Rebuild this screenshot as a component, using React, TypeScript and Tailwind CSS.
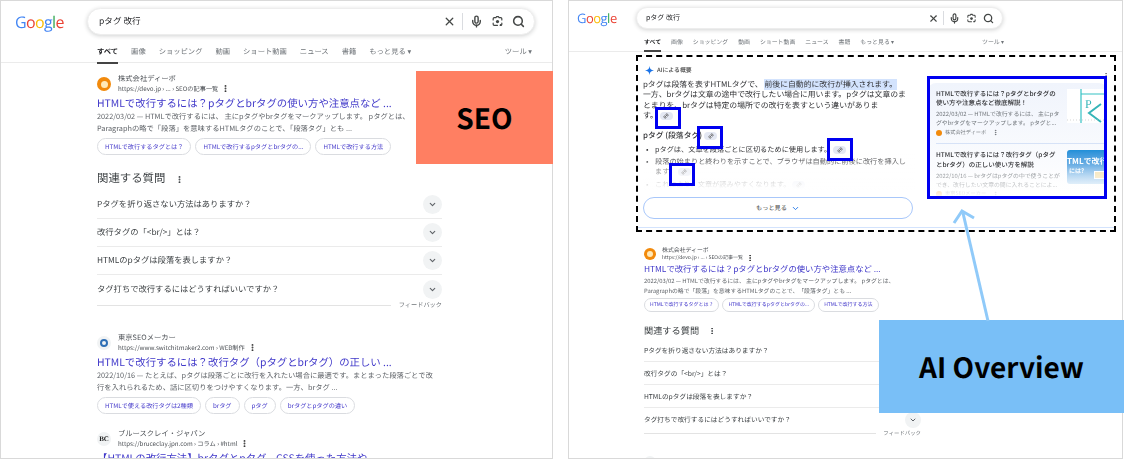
import { ChevronDown, EllipsisVertical, Link2, Mic, Search, X } from "lucide-react";
import type { ReactNode } from "react";

const FONT = { fontFamily: '"Noto Sans CJK JP", sans-serif' };

const LensIcon = ({ className }: { className: string }) => (
  <svg viewBox="0 0 24 24" className={className} fill="none" stroke="#444746" strokeWidth="2.2">
    <path d="M4 9V7a2 2 0 0 1 2-2h3l1.5-2h3L15 5h3a2 2 0 0 1 2 2v2M20 15v2a2 2 0 0 1-2 2h-1M4 15v2a2 2 0 0 0 2 2h6" strokeLinecap="round" />
    <circle cx="12" cy="12" r="3" fill="#444746" stroke="none" />
    <circle cx="18" cy="18.5" r="1.8" fill="#444746" stroke="none" />
  </svg>
);

const Logo = ({ className }: { className: string }) => (
  <div className={`font-['Open_Sans',sans-serif] tracking-[-0.04em] ${className}`}>
    <span className="text-[#4285f4]">G</span>
    <span className="text-[#ea4335]">o</span>
    <span className="text-[#fbbc05]">o</span>
    <span className="text-[#4285f4]">g</span>
    <span className="text-[#34a853]">l</span>
    <span className="text-[#ea4335]">e</span>
  </div>
);

const TABS = ["画像", "ショッピング", "動画", "ショート動画", "ニュース", "書籍"];

const Favicon = ({ kind, className }: { kind: string; className: string }) => {
  if (kind === "devo") {
    return (
      <div className={`rounded-full bg-[#f28a0c] flex items-center justify-center shrink-0 ${className}`}>
        <div className="w-1/2 h-1/2 rounded-full bg-[#ffe9b8]" />
      </div>
    );
  }
  if (kind === "tokyo") {
    return (
      <div className={`rounded-full bg-[#f1f3f4] flex items-center justify-center shrink-0 ${className}`}>
        <div className="w-3/5 h-3/5 rounded-full border-2 border-[#2f6fb5]" />
      </div>
    );
  }
  return (
    <div className={`rounded-full bg-[#f1f3f4] flex items-center justify-center shrink-0 font-['Liberation_Serif',serif] font-bold text-[#222] ${className}`}>
      BC
    </div>
  );
};

type Size = {
  head: string;
  fav: string;
  gap: string;
  name: string;
  url: string;
  dots: string;
  title: string;
  snippet: string;
  chips: string;
  chip: string;
};

const BIG: Size = {
  head: "h-[18px]",
  fav: "w-[14px] h-[14px] text-[7px]",
  gap: "gap-[7px]",
  name: "text-[7.3px] leading-[9px] text-[#4d5156]",
  url: "text-[6.2px] leading-[9px] text-[#4d5156]",
  dots: "w-[9px] h-[9px] ml-[3px]",
  title: "text-[10.4px] leading-[16px] mt-[2px] h-[16px]",
  snippet: "text-[7.3px] leading-[12px]",
  chips: "flex gap-[4px] mt-[3px]",
  chip: "h-[17px] px-[7px] text-[6.2px]",
};

const SMALL: Size = {
  head: "h-[15px]",
  fav: "w-[12px] h-[12px] text-[6px]",
  gap: "gap-[6px]",
  name: "text-[5.9px] leading-[8px] text-[#4d5156]",
  url: "text-[5px] leading-[7px] text-[#4d5156]",
  dots: "w-[8px] h-[8px] ml-[3px]",
  title: "text-[8.35px] leading-[14px] mt-[1px] h-[14px]",
  snippet: "text-[5.85px] leading-[9.5px]",
  chips: "flex gap-[3px] mt-[3px]",
  chip: "h-[14px] px-[5px] text-[5px]",
};

type ResultProps = {
  size: Size;
  kind: string;
  name: string;
  url: string;
  title?: string;
  lines?: string[];
  chips?: string[];
  className?: string;
};

const Result = ({ size, kind, name, url, title, lines = [], chips = [], className = "" }: ResultProps) => (
  <div className={`whitespace-nowrap ${className}`}>
    <div className={`flex items-center ${size.head} ${size.gap}`}>
      <Favicon kind={kind} className={size.fav} />
      <div>
        <div className={size.name}>{name}</div>
        {url && (
          <div className={`flex items-center ${size.url}`}>
            {url}
            <EllipsisVertical className={`${size.dots} text-[#333]`} strokeWidth={3} />
          </div>
        )}
      </div>
    </div>
    {title && <div className={`text-[#3f37c9] ${size.title}`}>{title}</div>}
    {lines.map((l) => (
      <div key={l} className={`text-[#5f6368] ${size.snippet}`}>{l}</div>
    ))}
    {chips.length > 0 && (
      <div className={size.chips}>
        {chips.map((c) => (
          <div key={c} className={`flex items-center rounded-full border border-[#dadce0] text-[#4338ca] ${size.chip}`}>{c}</div>
        ))}
      </div>
    )}
  </div>
);

const QUESTIONS = [
  "Pタグを折り返さない方法はありますか？",
  "改行タグの「<br/>」とは？",
  "HTMLのpタグは段落を表しますか？",
  "タグ打ちで改行するにはどうすればいいですか？",
];

const Questions = ({ big }: { big: boolean }) => (
  <div className={big ? "w-[345px]" : "w-[277px]"}>
    <div className={`flex items-center text-[#3c4043] ${big ? "text-[11.4px] h-[16px] gap-[10px]" : "text-[9.2px] h-[14px] gap-[9px]"}`}>
      関連する質問
      <EllipsisVertical className={big ? "w-[9px] h-[9px]" : "w-[8px] h-[8px]"} strokeWidth={3} />
    </div>
    <div className={big ? "mt-[4px]" : "mt-[1px]"}>
      {QUESTIONS.map((q, i) => (
        <div
          key={q}
          className={`flex items-center justify-between text-[#3c4043] ${
            i < 3 ? "border-b border-[#ebebeb]" : ""
          } ${big ? "h-[28px] text-[8.3px]" : "h-[23px] text-[6.7px]"}`}
        >
          {q}
          <div className={`rounded-full bg-[#f1f3f4] flex items-center justify-center ${big ? "w-[19px] h-[19px]" : "w-[16px] h-[16px]"}`}>
            <ChevronDown className={big ? "w-[9px] h-[9px]" : "w-[8px] h-[8px]"} color="#5f6368" strokeWidth={3} />
          </div>
        </div>
      ))}
    </div>
    <div className={`flex items-center text-[#70757a] ${big ? "gap-[8px] text-[6.2px] h-[8px] -mt-[2px]" : "gap-[7px] text-[5.4px] h-[8px] -mt-[2px]"}`}>
      <div className="flex-1 border-t border-[#e3e3e3]" />
      フィードバック
    </div>
  </div>
);

const SearchBar = ({ big }: { big: boolean }) => {
  const icon = big ? "w-[13px] h-[13px]" : "w-[11px] h-[11px]";
  return (
    <div
      className={`flex items-center rounded-full bg-white border border-[#ededed] shadow-[0_1px_4px_rgba(32,33,36,0.2)] ${
        big ? "w-[448px] h-[27px] pl-[11px] pr-[9px] text-[8.6px]" : "w-[367px] h-[22px] pl-[9px] pr-[8px] text-[7px]"
      }`}
    >
      <span className="flex-1 text-[#202124]">pタグ 改行</span>
      <div className={`flex items-center ${big ? "gap-[8px]" : "gap-[6px]"}`}>
        <X className={`${icon} -mr-[2px]`} color="#444746" strokeWidth={2.4} />
        <div className={`border-l border-[#dadce0] -mr-[1px] ${big ? "h-[17px]" : "h-[14px]"}`} />
        <Mic className={icon} color="#444746" strokeWidth={2.6} />
        <LensIcon className={icon} />
        <Search className={icon} color="#444746" strokeWidth={2.8} />
      </div>
    </div>
  );
};

const Tabs = ({ big }: { big: boolean }) => (
  <div className={`flex justify-between text-[#70757a] ${big ? "w-[435px] h-[17px] text-[7.3px]" : "w-[360px] h-[14px] text-[5.9px]"}`}>
    <div className={`flex ${big ? "gap-[13px]" : "gap-[10px]"}`}>
      <div className="font-bold text-[#202124] border-b-2 border-[#444]">すべて</div>
      {TABS.map((t) => (
        <div key={t}>{t}</div>
      ))}
      <div>もっと見る ▾</div>
    </div>
    <div>ツール ▾</div>
  </div>
);

const DEVO = {
  kind: "devo",
  name: "株式会社ディーボ",
  url: "https://devo.jp › ... › SEOの記事一覧",
  title: "HTMLで改行するには？pタグとbrタグの使い方や注意点など ...",
  lines: [
    "2022/03/02 — HTMLで改行するには、 主にpタグやbrタグをマークアップします。 pタグとは、",
    "Paragraphの略で「段落」を意味するHTMLタグのことで、「段落タグ」とも ...",
  ],
  chips: ["HTMLで改行するタグとは？", "HTMLで改行するpタグとbrタグの...", "HTMLで改行する方法"],
};

const Pill = () => (
  <span className="inline-flex items-center justify-center w-[13px] h-[8px] rounded-full bg-[#e4e8f3] align-middle ml-[2px]">
    <Link2 className="w-[6px] h-[6px] -rotate-45" color="#555" strokeWidth={3} />
  </span>
);

const SourceCard = ({ title, lines, source, thumb }: { title: string[]; lines: string[]; source: string; thumb: ReactNode }) => (
  <div className="flex gap-[6px] whitespace-nowrap">
    <div className="w-[126px] overflow-hidden">
      {title.map((t) => (
        <div key={t} className="text-[6.5px] leading-[9.2px] font-medium text-[#303134]">{t}</div>
      ))}
      <div className="mt-[2px]">
        {lines.map((l) => (
          <div key={l} className="text-[5.85px] leading-[9px] text-[#70757a]">{l}</div>
        ))}
      </div>
      <div className="flex items-center gap-[3px] mt-[1px] text-[5.2px] text-[#70757a] h-[9px]">
        <div className="w-[6px] h-[6px] rounded-full bg-[#f28a0c]" />
        {source}
        <EllipsisVertical className="w-[7px] h-[7px] ml-[3px]" strokeWidth={3} />
      </div>
    </div>
    {thumb}
  </div>
);

const ThumbP = () => (
  <div className="w-[40px] h-[34px] bg-white overflow-hidden flex items-center justify-center shrink-0">
    <svg viewBox="0 0 40 34" className="w-[40px] h-[34px]">
      <path d="M14 0V34M14 5H40" stroke="#35c2c4" strokeWidth="1.2" fill="none" />
      <text x="18" y="19" fontSize="12" fill="#35b5b8" fontFamily="Liberation Serif">P</text>
      <path d="M34 15L22 24L34 33" stroke="#35b5b8" strokeWidth="2" fill="none" />
      <path d="M0 31H40" stroke="#bbb" strokeWidth="0.6" strokeDasharray="1 2" />
    </svg>
  </div>
);

const ThumbBlue = () => (
  <div className="w-[40px] h-[34px] rounded-l-[3px] overflow-hidden bg-gradient-to-b from-[#1f8fd8] to-[#b7d8f2] text-white font-bold text-[8px] leading-[9px] pt-[7px] shrink-0 relative">
    <span className="-ml-[6px] block">HTMLで改行</span>
    <span className="text-[6px] pl-[2px]">には?</span>
    <div className="absolute right-[2px] bottom-[5px] w-[11px] h-[8px] bg-[#f4e3b4] border border-white" />
  </div>
);

const AiOverview = () => (
  <div className="relative ml-[67px] mt-[3px] w-[480px] h-[177px] border-2 border-dashed border-black pl-[5px] pt-[8px] text-[#202124] whitespace-nowrap overflow-hidden">
    <div className="absolute right-[4px] top-[15px]">
      <EllipsisVertical className="w-[8px] h-[8px] text-[#777]" strokeWidth={3} />
    </div>
    <div className="flex gap-[13px]">
      <div className="w-[272px]">
        <div className="flex items-center gap-[3px] text-[5.9px] h-[10px] font-medium text-[#444]">
          <svg viewBox="0 0 24 24" className="w-[9px] h-[9px] ml-[2px]">
            <path d="M12 0C13 8 16 11 24 12C16 13 13 16 12 24C11 16 8 13 0 12C8 11 11 8 12 0Z" fill="#1a73e8" />
          </svg>
          AIによる概要
        </div>
        <div className="text-[7.85px] leading-[10.4px] mt-[5px] text-[#303134]">
          <div>
            pタグは段落を表すHTMLタグで、 <span className="bg-[#d3e3fd]">前後に自動的に改行が挿入されます。</span>
          </div>
          <div>一方、brタグは文章の途中で改行したい場合に用います。pタグは文章のま</div>
          <div>とまりを、brタグは特定の場所での改行を表すという違いがありま</div>
          <div>す。<Pill /></div>
        </div>
        <div className="relative mt-[8px] text-[7.8px] leading-[12px] text-[#303134]">
          <div className="font-medium">pタグ (段落タグ)<Pill /></div>
          <ul className="mt-[3px] text-[7.2px] leading-[10.4px]">
            <li className="flex"><span className="w-[12px] pl-[3px]">•</span><span>pタグは、文章を段落ごとに区切るために使用します。<Pill /></span></li>
            <li className="flex mt-[2px]"><span className="w-[12px] pl-[3px]">•</span><span>段落の始まりと終わりを示すことで、ブラウザは自動的に前後に改行を挿入し<br />ます。<Pill /></span></li>
            <li className="flex mt-[2px]"><span className="w-[12px] pl-[3px]">•</span><span>これにより、文章が読みやすくなります。<Pill /></span></li>
          </ul>
          <div className="absolute left-0 right-0 bottom-0 h-[38px] bg-gradient-to-b from-white/0 to-white" />
        </div>
      </div>
      <div className="relative w-[179px] h-[116px] mt-[18px] bg-gradient-to-b from-[#f0f4fc] to-white rounded-[8px] pl-[8px] pt-[6px] overflow-hidden">
        <SourceCard
          title={["HTMLで改行するには？pタグとbrタグの", "使い方や注意点など徹底解説！"]}
          lines={["2022/03/02 — HTMLで改行するには、 主にpタ", "グやbrタグをマークアップします。 pタグと..."]}
          source="株式会社ディーボ"
          thumb={<ThumbP />}
        />
        <div className="border-t border-[#d6e2f7] mt-[6px] mb-[6px]" />
        <SourceCard
          title={["HTMLで改行するには？改行タグ（pタグ", "とbrタグ）の正しい使い方を解説"]}
          lines={["2022/10/16 — brタグはpタグの中で使うことが", "でき、改行したい文章の間に入れることによ..."]}
          source="東京SEOメーカー"
          thumb={<ThumbBlue />}
        />
        <div className="absolute left-0 right-0 bottom-0 h-[34px] bg-gradient-to-b from-white/0 to-white" />
      </div>
    </div>
    <div className="absolute left-[5px] top-[140px] w-[270px] h-[22px] rounded-full border border-[#a8c7fa] bg-white flex items-center justify-center gap-[4px] text-[6.2px] text-[#444]">
      もっと見る
      <ChevronDown className="w-[9px] h-[9px]" color="#1a73e8" strokeWidth={2.4} />
    </div>
    <div className="absolute left-0 right-0 top-[170px] border-t border-[#d3e3fd]" />
  </div>
);

export default function App() {
  return (
    <div className="relative w-[1124px] h-[459px] bg-white flex gap-[15px] [text-rendering:geometricPrecision]" style={FONT}>
      {/* 左: SEO */}
      <div className="relative w-[553px] h-[459px] border border-[#d9d9d9] overflow-hidden blur-[0.3px]">
        <div className="h-[62px] border-b border-[#ebebeb]">
          <div className="flex items-center pt-[7px]">
            <Logo className="w-[86px] pl-[14px] text-[16px] leading-[24px]" />
            <SearchBar big />
          </div>
          <div className="pl-[96px] mt-[12px]">
            <Tabs big />
          </div>
        </div>
        <div className="pl-[96px] pt-[12px]">
          <Result size={BIG} {...DEVO} />
          <div className="mt-[16px]">
            <Questions big />
          </div>
          <Result
            size={BIG}
            className="mt-[25px]"
            kind="tokyo"
            name="東京SEOメーカー"
            url="https://www.switchitmaker2.com › WEB制作"
            title="HTMLで改行するには？改行タグ（pタグとbrタグ）の正しい ..."
            lines={[
              "2022/10/16 — たとえば、pタグは段落ごとに改行を入れたい場合に最適です。まとまった段落ごとで改",
              "行を入れられるため、話に区切りをつけやすくなります。一方、brタグ ...",
            ]}
            chips={["HTMLで使える改行タグは2種類", "brタグ", "pタグ", "brタグとpタグの違い"]}
          />
          <Result
            size={BIG}
            className="mt-[16px]"
            kind="bc"
            name="ブルースクレイ・ジャパン"
            url="https://bruceclay.jpn.com › コラム › #html"
            title="【HTMLの改行方法】brタグとpタグ、CSSを使った方法や ..."
          />
        </div>
      </div>

      {/* 右: AI Overview */}
      <div className="relative w-[555px] h-[459px] border border-[#d9d9d9] overflow-hidden blur-[0.3px]">
        <div className="h-[51px] border-b border-[#ebebeb]">
          <div className="flex items-center pt-[6px]">
            <Logo className="w-[67px] pl-[8px] text-[13px] leading-[22px]" />
            <SearchBar big={false} />
          </div>
          <div className="pl-[75px] mt-[9px]">
            <Tabs big={false} />
          </div>
        </div>
        <AiOverview />
        <div className="pl-[75px] mt-[14px]">
          <Result size={SMALL} {...DEVO} />
          <div className="mt-[12px]">
            <Questions big={false} />
          </div>
          <Result size={SMALL} className="mt-[17px]" kind="tokyo" name="東京SEOメーカー" url="" />
        </div>
      </div>

      {/* 注釈 */}
      <div className="absolute left-[416px] top-[71px] w-[137px] h-[93px] bg-[#ff7f62] flex items-center justify-center text-[28px] font-bold text-black">
        SEO
      </div>
      <div className="absolute left-[879px] top-[320px] w-[245px] h-[93px] bg-[#79bff7] flex items-center justify-center text-[28px] font-bold text-black">
        AI Overview
      </div>
      <div className="absolute left-[927px] top-[76px] w-[180px] h-[123px] border-[3px] border-[#0000f0]" />
      <div className="absolute left-[655px] top-[107px] w-[26px] h-[22px] border-[3px] border-[#0000f0]" />
      <div className="absolute left-[697px] top-[126px] w-[26px] h-[23px] border-[3px] border-[#0000f0]" />
      <div className="absolute left-[827px] top-[138px] w-[26px] h-[23px] border-[3px] border-[#0000f0]" />
      <div className="absolute left-[669px] top-[163px] w-[26px] h-[23px] border-[3px] border-[#0000f0]" />
      <svg className="absolute left-[950px] top-[205px] w-[45px] h-[118px]" viewBox="0 0 45 118" fill="none" stroke="#90caf9" strokeWidth="3">
        <path d="M38 116L13 8" />
        <path d="M4 18L12 6L24 13" />
      </svg>
    </div>
  );
}
